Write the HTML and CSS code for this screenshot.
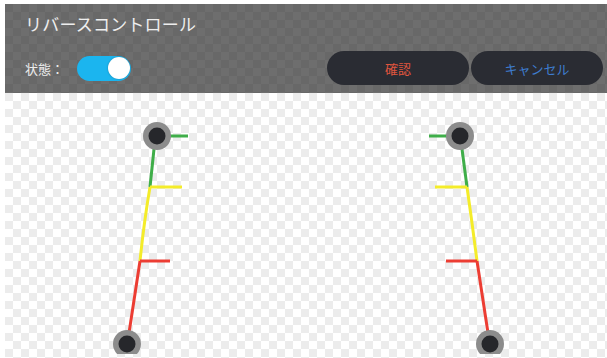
FILE: index.html
```html
<!DOCTYPE html>
<html lang="ja">
<head>
  <meta charset="UTF-8" />
  <meta name="viewport" content="width=device-width, initial-scale=1.0">
  <title>リバースコントロール</title>
  <link rel="stylesheet" href="styles.css">
</head>
<body>
  <div class="screen">
    <div class="header">
      <div class="title">リバースコントロール</div>
      <div class="controls">
        <span class="status-label">状態：</span>
        <div class="toggle on"><span class="knob"></span></div>
        <div class="actions">
          <button class="btn confirm">確認</button>
          <button class="btn cancel">キャンセル</button>
        </div>
      </div>
    </div>
    <div class="preview">
      <svg class="guides" width="602" height="261" viewBox="5 93 602 261">
        <!-- left guide -->
        <polyline points="170,136 188,136" class="g"/>
        <polyline points="154,149 150,187" class="g"/>
        <polyline points="150,187 182,187" class="y"/>
        <path d="M150 187 Q144 222 140 261" class="y"/>
        <polyline points="140,261 170,261" class="r"/>
        <polyline points="140,261 129,333" class="r"/>
        <circle cx="157" cy="136" r="14" class="ring"/>
        <circle cx="157" cy="136" r="8.5" class="dot"/>
        <circle cx="127" cy="344" r="14" class="ring"/>
        <circle cx="127" cy="344" r="8.5" class="dot"/>
        <!-- right guide -->
        <polyline points="429,136 448,136" class="g"/>
        <polyline points="462,149 467,187" class="g"/>
        <polyline points="435,187 467,187" class="y"/>
        <path d="M467 187 Q472 222 477 261" class="y"/>
        <polyline points="446,261 477,261" class="r"/>
        <polyline points="477,261 488,333" class="r"/>
        <circle cx="460" cy="136" r="14" class="ring"/>
        <circle cx="460" cy="136" r="8.5" class="dot"/>
        <circle cx="490" cy="344" r="14" class="ring"/>
        <circle cx="490" cy="344" r="8.5" class="dot"/>
      </svg>
    </div>
  </div>
</body>
</html>
```

FILE: styles.css
```css
* {
  box-sizing: border-box;
}
html, body {
  margin: 0;
  height: 100%;
}
body {
  padding: 4px 0 0 5px;
  background: #ffffff;
  font-family: "Noto Sans CJK JP", "Noto Sans", sans-serif;
  overflow: hidden;
}
.screen {
  display: flex;
  flex-direction: column;
  height: 354px;
}
.header {
  height: 89px;
  padding: 0 4px 0 20px;
  background-color: #6b6b6b;
  background-image:
    conic-gradient(#6e6e6e 25%, #686868 0 50%, #6e6e6e 0 75%, #686868 0);
  background-size: 16px 16px;
  display: flex;
  flex-direction: column;
}
.title {
  margin-top: 8px;
  font-size: 17px;
  line-height: 24px;
  color: #eeeeee;
  letter-spacing: 0.2px;
}
.controls {
  margin-top: 15px;
  display: flex;
  align-items: center;
  height: 34px;
}
.status-label {
  font-size: 13px;
  color: #ececec;
  width: 52px;
}
.toggle {
  position: relative;
  width: 54px;
  height: 25px;
  border-radius: 13px;
  background: #1bb5ef;
}
.toggle .knob {
  position: absolute;
  top: 1.5px;
  right: 1.5px;
  width: 22px;
  height: 22px;
  border-radius: 50%;
  background: #ffffff;
  box-shadow: 0 0 2px rgba(0,0,0,0.3);
}
.actions {
  margin-left: auto;
  display: flex;
  gap: 2px;
}
.btn {
  height: 34px;
  border: none;
  border-radius: 17px;
  background: #2a2c33;
  font-family: inherit;
  font-size: 13px;
  cursor: pointer;
}
.confirm {
  width: 142px;
  color: #e0553e;
}
.cancel {
  width: 132px;
  color: #3e7cce;
}
.preview {
  flex: 1;
  background-color: #ffffff;
  background-image:
    conic-gradient(#ffffff 25%, #ececec 0 50%, #ffffff 0 75%, #ececec 0);
  background-size: 16px 16px;
}
.guides {
  display: block;
}
.guides polyline, .guides path {
  fill: none;
  stroke-width: 3;
  stroke-linecap: butt;
}
.guides .g { stroke: #3fae49; }
.guides .y { stroke: #f4ec2a; }
.guides .r { stroke: #ec3d33; }
.guides .ring { fill: #8c8c8c; }
.guides .dot { fill: #26272b; }
```
